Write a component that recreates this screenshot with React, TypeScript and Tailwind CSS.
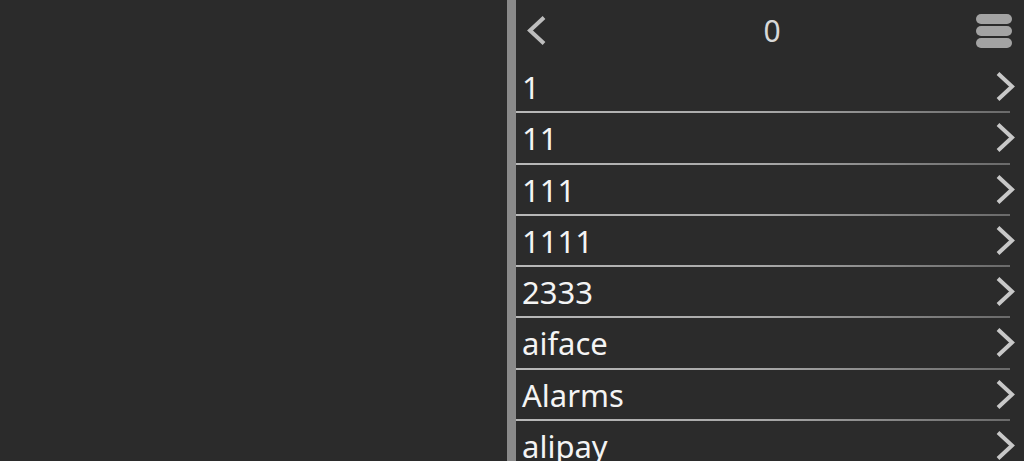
const items = ["1", "11", "111", "1111", "2333", "aiface", "Alarms", "alipay"];

function Chevron({ dir }: { dir: "left" | "right" }) {
  return (
    <svg width="20" height="31" viewBox="0 0 20 31" className="shrink-0">
      <path
        d={dir === "right" ? "M3 2.5 L17 15.5 L3 28.5" : "M17 2.5 L3 15.5 L17 28.5"}
        fill="none"
        stroke={dir === "right" ? "#c8c8c8" : "#bdbdbd"}
        strokeWidth="4"
        strokeLinecap="butt"
        strokeLinejoin="miter"
      />
    </svg>
  );
}

export default function App() {
  return (
    <div
      className="flex h-[461px] w-[1024px] overflow-hidden bg-[#2b2b2b] text-[#f4f4f4]"
      style={{ fontFamily: '"Noto Sans", "Open Sans", sans-serif' }}
    >
      <div className="w-[507px] shrink-0" />
      <div className="w-[9px] shrink-0 bg-[#8a8a8a]" />

      <div className="flex min-w-0 flex-1 flex-col">
        <div className="flex h-[62px] shrink-0 items-center pl-[11px] pr-[12px]">
          <div className="-mt-[1px]">
            <Chevron dir="left" />
          </div>
          <div className="flex-1 pl-[21px] text-center text-[30px] leading-none text-[#d8d8d8]">0</div>
          <div className="flex flex-col gap-[2px]">
            <div className="h-[10px] w-[36px] rounded-full bg-[#a3a3a3]" />
            <div className="h-[10px] w-[36px] rounded-full bg-[#a3a3a3]" />
            <div className="h-[10px] w-[36px] rounded-full bg-[#a3a3a3]" />
          </div>
        </div>

        {items.map((name) => (
          <div key={name} className="shrink-0">
            <div className="flex h-[49.25px] items-center pl-[6px] pr-[9px]">
              <span className="flex-1 pt-[2px] text-[31px] leading-none">{name}</span>
              <Chevron dir="right" />
            </div>
            <div className="mr-[14px] h-[2px] bg-gradient-to-r from-[#b8b8b8] via-[#a8a8a8] to-[#6a6a6a]" />
          </div>
        ))}
      </div>
    </div>
  );
}
